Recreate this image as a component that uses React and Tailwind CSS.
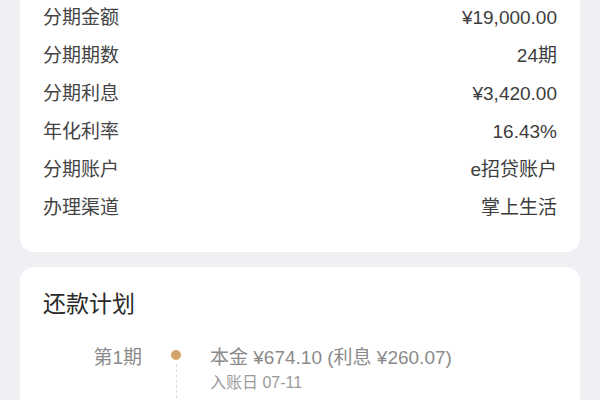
const details = [
  ["分期金额", "¥19,000.00"],
  ["分期期数", "24期"],
  ["分期利息", "¥3,420.00"],
  ["年化利率", "16.43%"],
  ["分期账户", "e招贷账户"],
  ["办理渠道", "掌上生活"],
];

export default function App() {
  return (
    <div
      className="min-h-screen bg-[#eef0f4] px-5 pb-6"
      style={{ fontFamily: '"Liberation Sans", "Noto Sans CJK SC", sans-serif' }}
    >
      {/* Details card */}
      <div className="bg-white rounded-b-[14px] px-[23px] pb-[25px] -mt-px">
        {details.map(([label, value]) => (
          <div key={label} className="flex items-center justify-between h-[38px] text-[19px]">
            <span className="text-[#444]">{label}</span>
            <span className="text-[#3d3d3d]">{value}</span>
          </div>
        ))}
      </div>

      {/* Repayment plan */}
      <div className="mt-[15px] bg-white rounded-[14px] px-[23px] pt-[22px] pb-10">
        <h2 className="text-[23px] leading-[30px] text-[#2a2a2a]">还款计划</h2>
        <div className="mt-[26px] flex">
          <div className="w-[99px] text-right text-[19px] leading-[26px] text-[#8a8a8a]">第1期</div>
          <div className="w-[68px] flex flex-col items-center">
            <div className="mt-[5px] w-[10px] h-[10px] rounded-full bg-[#d6a26c]" />
            <div className="mt-[4px] h-[60px] border-l border-dashed border-[#dedede]" />
          </div>
          <div>
            <div className="text-[19px] leading-[26px] text-[#8a8a8a]">本金 ¥674.10 (利息 ¥260.07)</div>
            <div className="mt-px text-[16px] leading-[22px] text-[#9a9a9a]">入账日 07-11</div>
          </div>
        </div>
      </div>
    </div>
  );
}
